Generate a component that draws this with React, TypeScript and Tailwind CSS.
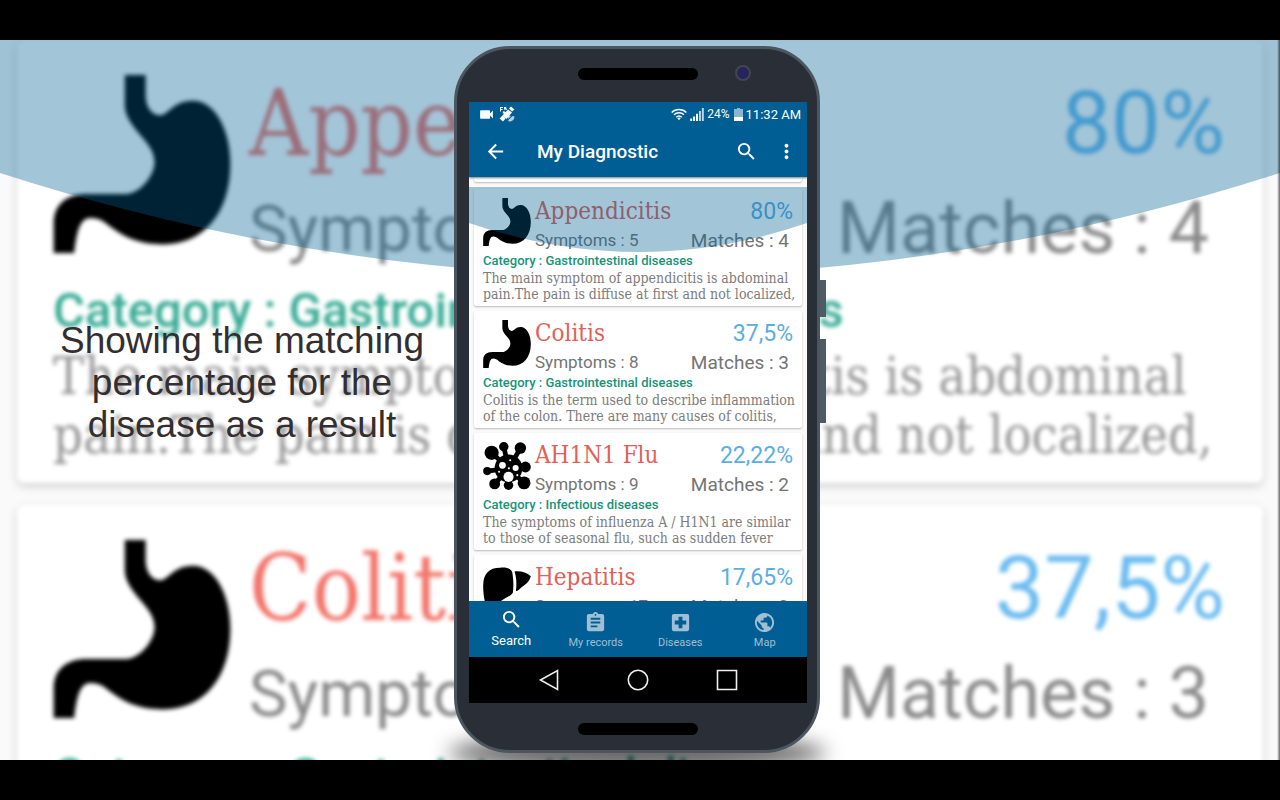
import type { ReactNode } from 'react';
import {
  MdArrowBack,
  MdAssignment,
  MdLocalHospital,
  MdMoreVert,
  MdPublic,
  MdSearch,
  MdVideocam,
} from 'react-icons/md';

function StomachIcon() {
  return (
    <svg viewBox="0 0 534 538" className="h-full w-full" aria-hidden="true">
      <path d="M215 0H278V60C278 100 298 122 322 122C345 122 362 78 420 78C490 78 534 170 534 268C534 420 450 512 330 512C270 512 225 498 180 465C150 442 140 432 112 432C80 432 70 470 62 538H0V450C0 390 40 360 100 360H215C260 360 305 305 305 262C305 200 215 160 215 90Z" />
    </svg>
  );
}

function VirusIcon() {
  return (
    <svg viewBox="0 0 141 142" className="h-full w-full" aria-hidden="true">
      <g stroke="#000" strokeWidth="14" strokeLinecap="round">
        <path d="M75 78L25 32M75 78L61 13M75 78L110 19M75 78L125 74M75 78L11 86M75 78L34 124M75 78L75 128M75 78L121 121" />
      </g>
      <circle cx="25" cy="32" r="21" />
      <circle cx="61" cy="14" r="14" />
      <circle cx="110" cy="18" r="17" />
      <circle cx="125" cy="74" r="16" />
      <circle cx="12" cy="86" r="12" />
      <circle cx="34" cy="124" r="16" />
      <circle cx="75" cy="128" r="14" />
      <circle cx="121" cy="121" r="19" />
      <circle cx="75" cy="78" r="41" />
      <g fill="#fff">
        <circle cx="57" cy="69" r="10" />
        <circle cx="96" cy="77" r="9" />
        <circle cx="75" cy="103" r="15" />
        <circle cx="80" cy="54" r="3" />
        <circle cx="76" cy="78" r="3" />
        <circle cx="47" cy="88" r="3" />
        <circle cx="101" cy="98" r="3" />
      </g>
    </svg>
  );
}

function LiverIcon() {
  return (
    <svg viewBox="0 -8 141 142" className="h-full w-full" aria-hidden="true">
      <path d="M0 56C0 20 18 3 50 3C74 1 86 8 87 22C90 40 90 60 88 76C80 90 62 92 50 104C40 120 30 134 20 134C8 128 0 90 0 56Z" />
      <path d="M93 14C110 12 128 16 141 28C136 48 118 56 108 66C104 70 100 73 97 71C100 50 98 30 93 14Z" />
    </svg>
  );
}

type Disease = {
  name: string;
  percent: string;
  symptoms: number;
  matches: number;
  category?: string;
  lines?: string[];
  icon: ReactNode;
};

const diseases: Disease[] = [
  {
    name: 'Appendicitis',
    percent: '80%',
    symptoms: 5,
    matches: 4,
    category: 'Gastrointestinal diseases',
    lines: ['The main symptom of appendicitis is abdominal', 'pain.The pain is diffuse at first and not localized,'],
    icon: <StomachIcon />,
  },
  {
    name: 'Colitis',
    percent: '37,5%',
    symptoms: 8,
    matches: 3,
    category: 'Gastrointestinal diseases',
    lines: ['Colitis is the term used to describe inflammation', 'of the colon. There are many causes of colitis,'],
    icon: <StomachIcon />,
  },
  {
    name: 'AH1N1 Flu',
    percent: '22,22%',
    symptoms: 9,
    matches: 2,
    category: 'Infectious diseases',
    lines: ['The symptoms of influenza A / H1N1 are similar', 'to those of seasonal flu, such as sudden fever'],
    icon: <VirusIcon />,
  },
  {
    name: 'Hepatitis',
    percent: '17,65%',
    symptoms: 17,
    matches: 3,
    icon: <LiverIcon />,
  },
];

const small = {
  card: 'h-[117px] rounded-[2px] pt-[9px] px-[9px] shadow-[0_1px_2px_rgba(0,0,0,0.25)]',
  top: 'gap-1',
  icon: 'size-12',
  row1: 'h-[26px]',
  title: 'text-[24px] text-[#df6157]',
  percent: 'text-[23px] text-[#5aaee4]',
  row2: 'mt-1 h-6 text-[#747474]',
  symptoms: 'text-[17px]',
  matches: 'text-[19px] mr-1',
  category: 'mt-px text-[13px] leading-[15px] text-[#16947a]',
  text: 'mt-0.5 text-[14px] leading-4 text-[#7c7c7c]',
};

const large: typeof small = {
  card: 'h-[443px] rounded-[8px] pt-[35px] pl-9 pr-[38px] shadow-[0_3px_8px_rgba(0,0,0,0.18)]',
  top: 'gap-[18px]',
  icon: 'size-[178px]',
  row1: 'h-[96px]',
  title: 'text-[91px] text-[#f2766c]',
  percent: 'text-[88px] text-[#6cbcf0]',
  row2: 'mt-3 h-[92px] text-[#8a8a8a]',
  symptoms: 'text-[65px]',
  matches: 'text-[72px] mr-4',
  category: 'mt-2 text-[49px] leading-[56px] text-[#36ab94]',
  text: 'mt-2 text-[52px] leading-[59px] text-[#969696]',
};

const serif = "font-['DejaVu_Serif_Condensed','DejaVu_Serif',serif]";

function DiseaseCard({ disease, size }: { disease: Disease; size: typeof small }) {
  return (
    <article className={`shrink-0 bg-white whitespace-nowrap ${size.card}`}>
      <div className={`flex ${size.top}`}>
        <div className={`shrink-0 ${size.icon}`}>{disease.icon}</div>
        <div className="min-w-0 grow">
          <div className={`flex items-center justify-between leading-none ${size.row1}`}>
            <h2 className={`${serif} ${size.title}`}>{disease.name}</h2>
            <span className={size.percent}>{disease.percent}</span>
          </div>
          <div className={`flex items-center justify-between leading-none ${size.row2}`}>
            <span className={size.symptoms}>Symptoms : {disease.symptoms}</span>
            <span className={size.matches}>Matches : {disease.matches}</span>
          </div>
        </div>
      </div>
      {disease.category && <p className={`font-medium ${size.category}`}>Category : {disease.category}</p>}
      {disease.lines && (
        <p className={`${serif} ${size.text}`}>
          {disease.lines.map((line) => (
            <span key={line} className="block">
              {line}
            </span>
          ))}
        </p>
      )}
    </article>
  );
}

function Backdrop() {
  return (
    <div className="absolute inset-0 overflow-hidden bg-[#fafafa]" aria-hidden="true">
      <div className="flex flex-col gap-[22px] px-[17px] blur-[2px]">
        <DiseaseCard disease={diseases[0]} size={large} />
        <DiseaseCard disease={diseases[1]} size={large} />
      </div>
      <svg
        viewBox="0 0 1280 236"
        preserveAspectRatio="none"
        className="absolute inset-x-0 top-0 h-[236px] w-full fill-[#005e94]/36"
      >
        <path d="M0 0H1280V133Q640 339 0 133Z" />
      </svg>
      <div className="absolute inset-y-0 right-0 w-[3px] bg-linear-to-r from-transparent to-black/60" />
    </div>
  );
}

function StatusBar() {
  return (
    <div className="flex h-6 items-center pr-[6px] pl-[9px] text-white">
      <MdVideocam className="size-[17px]" />
      <svg viewBox="0 0 16 16" className="ml-1 size-4 fill-white" aria-hidden="true">
        <path d="M1 1h3v1H2v1h1.600v1H2v1.500H1zM5 1h2l1 3H7L6 3 5 4.500zM12 .5l3.500 3-2.500 2L10 2.500zM9 3.500l4 3L7.500 13 3.500 9.500zM3.500 9.500l3 3L4 15.500.5 12.500zM4.500 5l4 2-1.500 2L3.500 7z" />
        <path d="M15.500 10.500A5 5 0 0 1 10 15.500L9 14.500l4.500-4.500zM9 9l3 1-3 3z" fillOpacity="0.7" />
      </svg>
      <div className="grow" />
      <svg viewBox="0 0 48 38" className="h-[13px] w-4" fill="none" stroke="#fff" strokeWidth="4.500" aria-hidden="true">
        <path d="M2 13C14 1 34 1 46 13M9 20C17 12 31 12 39 20M16 27C20 22 28 22 32 27" />
        <path d="M19 30L24 36L29 30Q24 26 19 30Z" fill="#fff" stroke="none" />
      </svg>
      <svg viewBox="0 0 42 40" className="ml-[3px] h-[13px] w-[14px] fill-white" aria-hidden="true">
        <path d="M0 32H6V40H0zM9 26H15V40H9zM18 18H24V40H18z" />
        <path d="M27 9H33V40H27zM36 0H42V40H36z" fillOpacity="0.75" />
      </svg>
      <span className="ml-[3px] text-[12px] leading-none">24%</span>
      <svg viewBox="0 0 9 13" className="ml-1 h-[13px] w-[9px] fill-white" aria-hidden="true">
        <path d="M3 0h3v1h3v8H0V1h3z" fillOpacity="0.55" />
        <path d="M0 9h9v4H0z" />
      </svg>
      <span className="ml-[3px] text-[13px] leading-none">11:32 AM</span>
    </div>
  );
}

const tabs = [
  { label: 'My records', Icon: MdAssignment },
  { label: 'Diseases', Icon: MdLocalHospital },
  { label: 'Map', Icon: MdPublic },
];

function Screen() {
  return (
    <div className="flex h-[601px] flex-col overflow-hidden bg-[#fafafa]">
      <header className="z-10 bg-[#005e94] shadow-[0_1px_2px_rgba(0,0,0,0.5)]">
        <StatusBar />
        <div className="flex h-[51px] items-center pr-[9px] pl-[15px] text-white">
          <button type="button" aria-label="Back">
            <MdArrowBack className="size-[23px]" />
          </button>
          <h1 className="ml-[30px] grow text-[19px] leading-none font-medium">My Diagnostic</h1>
          <button type="button" aria-label="Search">
            <MdSearch className="size-[23px]" />
          </button>
          <button type="button" aria-label="More options" className="ml-[17px]">
            <MdMoreVert className="size-[23px]" />
          </button>
        </div>
      </header>

      <main className="relative h-[424px] shrink-0 overflow-hidden">
        <div className="mx-[5px] h-[5px] rounded-b-[2px] bg-white shadow-[0_1px_2px_rgba(0,0,0,0.25)]" />
        <div className="mx-[5px] mt-[7px] flex flex-col gap-[5px]">
          {diseases.map((disease) => (
            <DiseaseCard key={disease.name} disease={disease} size={small} />
          ))}
        </div>
        <svg
          viewBox="0 0 338 65"
          preserveAspectRatio="none"
          className="absolute inset-x-0 top-[10px] h-[65px] w-full fill-[#005e94]/36"
          aria-hidden="true"
        >
          <path d="M0 0H338V36Q169 94 0 36Z" />
        </svg>
      </main>

      <nav className="z-10 grid h-14 shrink-0 grid-cols-4 bg-[#005e94]">
        <button type="button" className="flex flex-col items-center pt-[7px] text-white">
          <MdSearch className="size-[23px]" />
          <span className="mt-0.5 text-[13px] leading-[15px]">Search</span>
        </button>
        {tabs.map(({ label, Icon }) => (
          <button key={label} type="button" className="flex flex-col items-center pt-[10px] text-[#9fbfd5]">
            <Icon className="size-[23px]" />
            <span className="mt-px text-[11px] leading-[15px]">{label}</span>
          </button>
        ))}
      </nav>

      <div className="flex h-[46px] shrink-0 items-center justify-between bg-black px-[68px]">
        <button type="button" aria-label="System back">
          <svg viewBox="0 0 24 24" className="size-6" fill="none" stroke="#eee" strokeWidth="1.600">
            <path d="M3.500 12L20.500 2.500V21.500Z" />
          </svg>
        </button>
        <button type="button" aria-label="Home">
          <svg viewBox="0 0 24 24" className="size-6" fill="none" stroke="#eee" strokeWidth="1.600">
            <circle cx="12" cy="12" r="9.700" />
          </svg>
        </button>
        <button type="button" aria-label="Overview">
          <svg viewBox="0 0 24 24" className="size-6" fill="none" stroke="#eee" strokeWidth="1.600">
            <path d="M2.500 2.500H21.500V21.500H2.500Z" />
          </svg>
        </button>
      </div>
    </div>
  );
}

function Phone() {
  return (
    <div className="relative">
      <div className="absolute inset-x-[-6px] bottom-[-18px] h-9 rounded-[50%] bg-black/60 blur-[10px]" />
      <div className="absolute top-[234px] -right-1.5 h-[37px] w-3 bg-[#4f5b64]" />
      <div className="absolute top-[293px] -right-1.5 h-[84px] w-3 bg-[#4f5b64]" />
      <div className="relative rounded-[56px] border-[3px] border-[#4b5660] bg-[#2a2f37] pr-[10px] pl-3">
        <div className="flex h-[53px] items-center justify-center pb-1">
          <div className="h-3 w-[120px] rounded-full bg-black" />
          <div className="absolute top-[16px] right-[66px] size-4 rounded-full border-2 border-[#45454f] bg-[#26245e]" />
        </div>
        <Screen />
        <div className="flex h-[47px] items-center justify-center pt-1">
          <div className="h-3 w-[120px] rounded-full bg-black" />
        </div>
      </div>
    </div>
  );
}

export default function App() {
  return (
    <div className="flex min-h-screen flex-col bg-black py-10 font-[Roboto,sans-serif]">
      <div className="relative grow overflow-hidden">
        <Backdrop />
        <div className="relative grid grid-cols-[1fr_366px_1fr] pt-1.5 pr-1.5">
          <p className="mt-[274px] pl-[30px] text-center font-['Liberation_Sans',Arial,sans-serif] text-[37px] leading-[42px] text-[#332e2f]">
            Showing the matching
            <br />
            percentage for the
            <br />
            disease as a result
          </p>
          <Phone />
        </div>
      </div>
    </div>
  );
}
